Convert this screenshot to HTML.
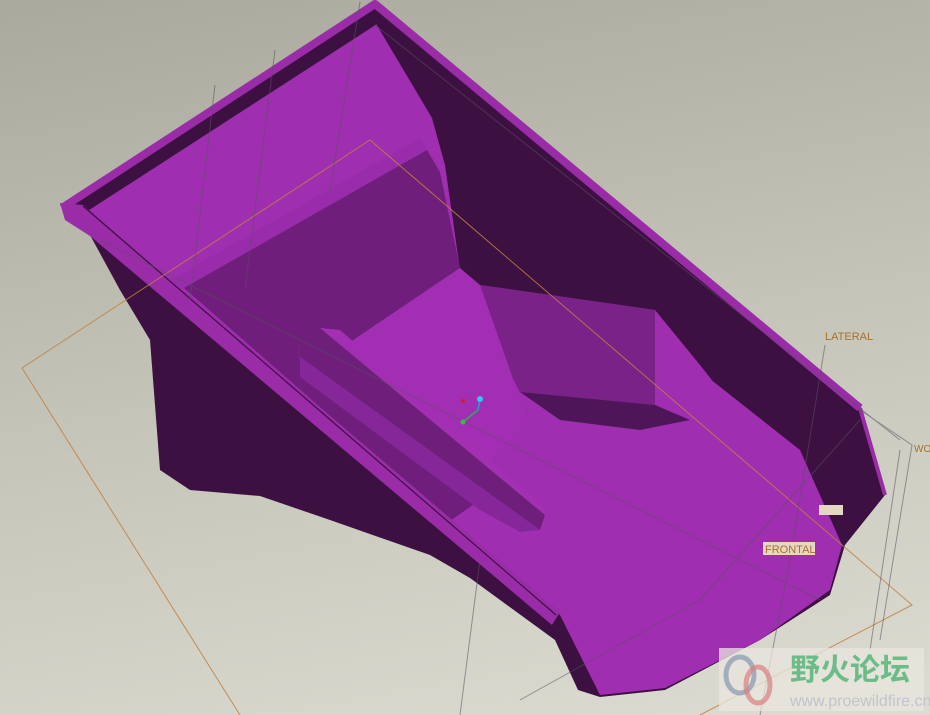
<!DOCTYPE html>
<html><head><meta charset="utf-8"><style>
html,body{margin:0;padding:0;width:930px;height:715px;overflow:hidden}
body{background:linear-gradient(170deg,#a9a99d 0%,#c4c4b8 50%,#dddcd2 100%)}
svg{position:absolute;left:0;top:0}
.t{font-family:"Liberation Sans",sans-serif}
</style></head><body>
<svg width="930" height="715" viewBox="0 0 930 715">
<!-- body dark -->
<polygon fill="#3c1141" points="62,205 375,2 860,405 885,495 845,545 830,595 760,640 665,690 600,697 578,690 555,640 470,578 430,555 330,520 260,496 190,490 160,470 150,340 120,290 90,235"/>
<!-- interior bright -->
<polygon fill="#a02eb0" points="83,205 375,22 432,118 445,165 460,270 480,285 655,310 705,375 800,450 842,545 830,590 760,640 665,688 600,695 560,615"/>
<!-- medium back wall + left strip -->
<polygon fill="#6f1f7b" points="184,288 427,150 440,172 452,230 460,268 343,347 320,328 298,340 300,360 480,500 450,521"/>
<polygon fill="#8a28a0" opacity="0.35" points="170,280 420,138 427,150 184,288"/>
<!-- right rib -->
<polygon fill="#7a2288" points="475,290 480,285 655,310 655,405 520,392 508,370"/>
<polygon fill="#a02eb0" points="655,310 700,365 830,530 840,545 805,530 690,420 655,405"/>
<polygon fill="#4e1658" points="520,392 655,405 690,420 640,430 560,420"/>
<!-- left rib -->
<polygon fill="#6e1f7a" points="298,340 320,328 545,515 540,530 300,357"/>
<polygon fill="#a32fb2" points="320,328 340,330 545,508 545,515"/>
<polygon fill="#852799" points="300,357 540,530 520,532 480,510 300,377"/>
<!-- center channel -->
<polygon fill="#a22fb3" points="343,347 460,268 480,285 510,370 528,425 490,460"/>
<!-- rim -->
<polyline points="62,208 375,4 860,408" fill="none" stroke="#9a2ca8" stroke-width="8" stroke-linejoin="round"/>
<polyline points="84,208 375,20" fill="none" stroke="#3c1141" stroke-width="9"/>
<polygon fill="#9a2ca8" points="60,203 83,205 560,612 552,625 90,236 65,220"/>
<line x1="83" y1="206" x2="556" y2="615" stroke="#3c1141" stroke-width="1.2"/>
<polyline points="860,408 885,495" fill="none" stroke="#9a2ca8" stroke-width="4"/>
<!-- datum planes -->
<g fill="none" stroke="#c08040" stroke-width="1" opacity="0.85">
<polyline points="22,368 370,140 912,605 700,715"/>
<polyline points="22,368 240,715"/>
</g>
<!-- grey construction lines -->
<g fill="none" stroke="#5a5060" stroke-width="1" opacity="0.55">
<polyline points="215,85 190,300"/>
<polyline points="275,50 245,290"/>
<polyline points="360,2 330,190"/>
<polyline points="100,240 820,600"/>
<polyline points="375,25 900,440"/>
<polyline points="825,345 790,560 760,715"/>
<polyline points="860,410 912,445 880,640"/>
<polyline points="900,450 870,650"/>
<polyline points="480,560 460,715"/>
<polyline points="520,700 700,600 860,420"/>
</g>
<!-- axis -->
<line x1="463" y1="422" x2="478" y2="410" stroke="#2ab04a" stroke-width="1.5"/>
<line x1="478" y1="410" x2="480" y2="399" stroke="#20a0d0" stroke-width="1.5"/>
<circle cx="463" cy="422" r="2.5" fill="#30c040"/>
<circle cx="480" cy="399" r="3" fill="#30c8f0"/>
<circle cx="463" cy="401" r="2" fill="#d02030"/>
<!-- labels -->
<text x="825" y="340" class="t" font-size="11" fill="#a8702c">LATERAL</text>
<text x="914" y="452" class="t" font-size="10" fill="#a8702c">WO</text>
<rect x="763" y="542" width="52" height="13" fill="#e4d8c4"/>
<text x="765" y="553" class="t" font-size="11" fill="#a8702c">FRONTAL</text>
<rect x="819" y="505" width="24" height="10" fill="#e4d8c4"/>
<!-- watermark -->
<rect x="719" y="648" width="205" height="63" fill="#e8e6de" opacity="0.75"/>
<ellipse cx="740" cy="675" rx="14" ry="18" fill="none" stroke="#8898b0" stroke-width="5" opacity="0.7"/>
<ellipse cx="758" cy="685" rx="12" ry="18" fill="none" stroke="#d88080" stroke-width="5" opacity="0.7"/>
<text x="790" y="680" font-family="'Noto Sans CJK SC',sans-serif" font-size="30" font-weight="bold" fill="#6cbc88">野火论坛</text>
<text x="790" y="706" class="t" font-size="16" fill="#c0c4cc">www.proewildfire.cn</text>
</svg>
</body></html>
